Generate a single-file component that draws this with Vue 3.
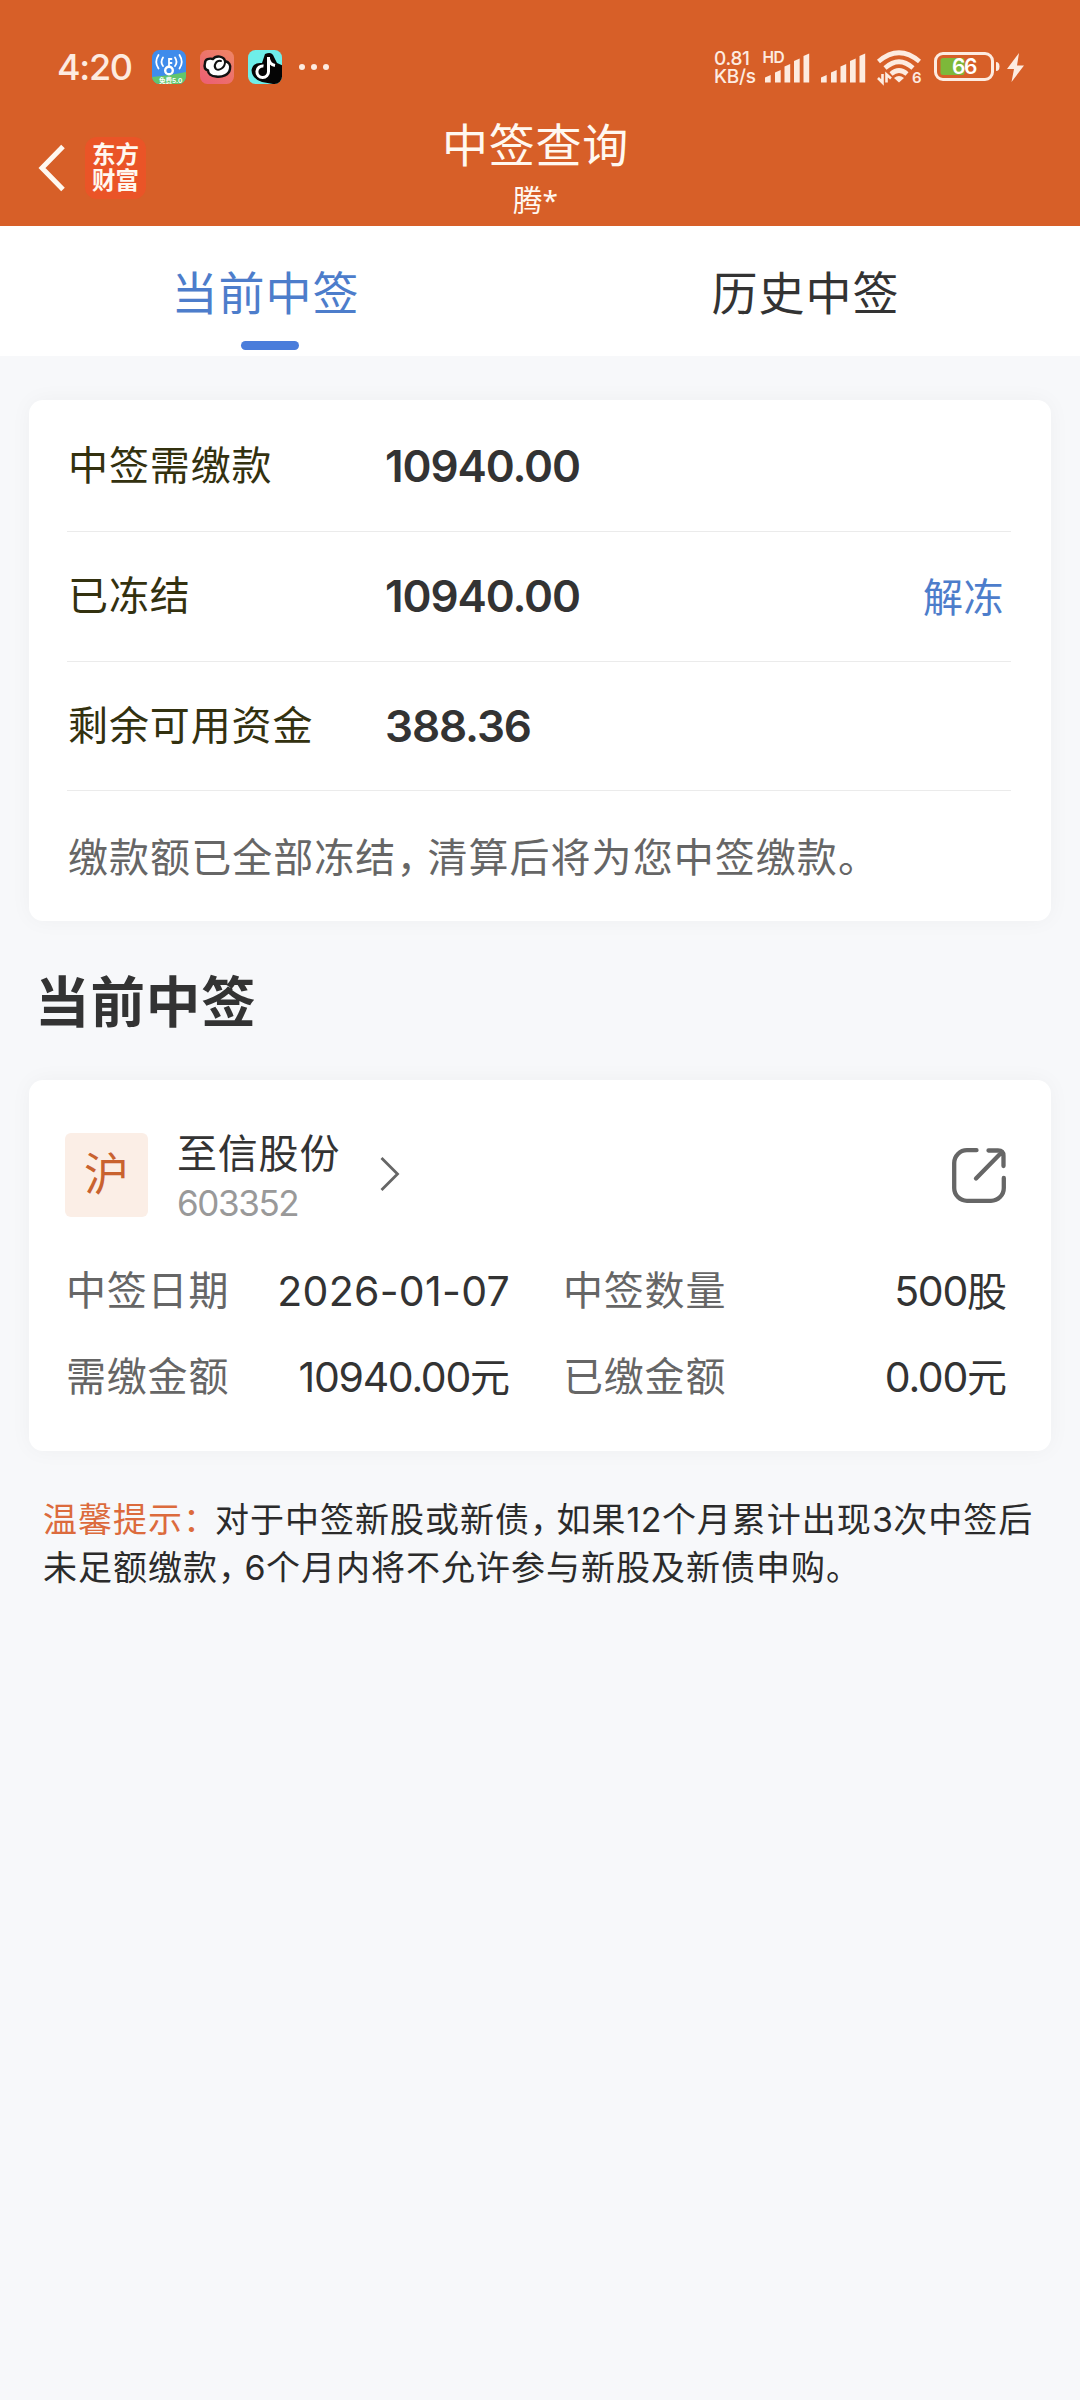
<script setup>
const summary = [
  { label: '中签需缴款', value: '10940.00' },
  { label: '已冻结', value: '10940.00', action: '解冻' },
  { label: '剩余可用资金', value: '388.36' },
]
const details = [
  { label: '中签日期', value: '2026-01-07', unit: '', date: true },
  { label: '中签数量', value: '500', unit: '股' },
  { label: '需缴金额', value: '10940.00', unit: '元' },
  { label: '已缴金额', value: '0.00', unit: '元' },
]
const bars = [
  { x: 0, h: 7 },
  { x: 10, h: 12 },
  { x: 19.5, h: 18 },
  { x: 29, h: 23.5 },
  { x: 38.5, h: 28.5 },
]
</script>

<template>
  <div class="page">
    <header class="header">
      <div class="status">
        <span class="time">4:20</span>
        <svg class="app" width="34" height="34" viewBox="0 0 34 34">
          <defs>
            <clipPath id="r1"><rect width="34" height="34" rx="7.5" /></clipPath>
          </defs>
          <g clip-path="url(#r1)">
            <rect width="34" height="34" fill="#3f8ceb" />
            <path d="M0 27 Q17 26 34 22 V34 H0Z" fill="#62c66c" />
            <g fill="none" stroke="#fff" stroke-width="1.8" stroke-linecap="round">
              <path d="M11 7.500 Q8 12 11 16" />
              <path d="M6.500 5 Q2 12 6.500 18.500" />
              <path d="M23 7.500 Q26 12 23 16" />
              <path d="M27.500 5 Q32 12 27.500 18.500" />
              <path d="M17 17V9h2.500M17 13h2.500" />
              <circle cx="17" cy="20.500" r="3.800" stroke-width="2.400" />
            </g>
            <text x="7" y="32.500" class="mini">免费5.0</text>
          </g>
        </svg>
        <svg class="app" width="34" height="34" viewBox="0 0 34 34">
          <defs>
            <linearGradient id="g2" x1="1" y1="0" x2="0.300" y2="1">
              <stop offset="0" stop-color="#ee8665" />
              <stop offset="1" stop-color="#ec6272" />
            </linearGradient>
          </defs>
          <rect width="34" height="34" rx="7.500" fill="url(#g2)" />
          <path d="M5 13c0-4 4-5 8-4 3-4 11-3 12 2 4 1 6 4 5 8-1 6-8 8.500-14 7.500-5 0-8-3-8-6-3-1-4-4-3-7.500z" fill="#fff" stroke="#111" stroke-width="2.400" />
          <path d="M21 11c-5-1-8 5-5 8 3 2 9-1 9-7" fill="none" stroke="#111" stroke-width="2" stroke-linecap="round" />
        </svg>
        <svg class="app" width="34" height="34" viewBox="0 0 34 34">
          <defs>
            <clipPath id="r3"><rect width="34" height="34" rx="7.500" /></clipPath>
          </defs>
          <g clip-path="url(#r3)">
            <rect width="34" height="34" fill="#6eeee9" />
            <path d="M17 4q7-3 9 3l3 6 7 3V36L14 32Q4 29 3.500 20 5 12 14 13z" fill="#050505" />
            <path d="M20.500 7v14.500a5.800 5.800 0 1 1-5-5.500M20.500 8.500q1 6 6.500 7" fill="none" stroke="#fff" stroke-width="3" />
          </g>
        </svg>
        <svg class="dots" width="30" height="6" viewBox="0 0 30 6" fill="#fdebe0">
          <circle cx="3" cy="3" r="3" /><circle cx="15" cy="3" r="3" /><circle cx="27" cy="3" r="3" />
        </svg>

        <div class="speed"><span>0.81</span><span>KB/s</span></div>
        <svg class="signal" width="46" height="34" viewBox="0 -5 46 34" fill="#fdebe0">
          <text x="-2.500" y="7.500" class="hd">HD</text>
          <path v-for="b in bars" :key="b.x" :d="`M${b.x} 27.500V${29.500 - b.h}l5.700-2.500V27.500z`" />
        </svg>
        <svg class="signal" width="46" height="34" viewBox="0 -5 46 34" fill="#fdebe0">
          <path v-for="b in bars" :key="b.x" :d="`M${b.x} 27.500V${29.500 - b.h}l5.700-2.500V27.500z`" />
        </svg>
        <svg class="wifi" width="45" height="34" viewBox="0 0 45 34">
          <g fill="none" stroke="#fdebe0" stroke-width="4.600">
            <path d="M1.500 11.500Q22 -6 42.500 11.500" />
            <path d="M8 18Q22 5.500 36 18" />
            <path d="M14 24Q22 17 30 24" />
          </g>
          <path d="M17 28Q22 24 27 28L22 32.500z" fill="#fdebe0" />
          <path d="M5.500 24v8.500L1 28M9.500 32.500v-8l4.500 4" fill="none" stroke="#fdebe0" stroke-width="2.600" />
          <text x="35" y="33" class="six">6</text>
        </svg>
        <svg class="battery" width="66" height="30" viewBox="0 0 66 30">
          <rect x="1.500" y="1.500" width="57" height="26" rx="7.500" fill="none" stroke="#fdebe0" stroke-width="3" />
          <rect x="6.500" y="6" width="24" height="17" rx="2.500" fill="#7db83a" />
          <path d="M62 10q3.500 0 3.500 4.500T62 19z" fill="#fdebe0" />
          <text x="30" y="22" text-anchor="middle" class="level">66</text>
        </svg>
        <svg class="bolt" width="17" height="29" viewBox="0 0 17 29">
          <path d="M12 0 0 16h7L4.500 29 17 12.500H10z" fill="#fdebe0" />
        </svg>
      </div>

      <nav class="nav">
        <svg class="back" width="26" height="48" viewBox="0 0 26 48">
          <path d="M24 2.500 3 24 24 45.500" fill="none" stroke="#fff8f0" stroke-width="5" />
        </svg>
        <div class="logo"><span>东方</span><span>财富</span></div>
        <div class="titles">
          <h1>中签查询</h1>
          <p>腾<i>*</i></p>
        </div>
      </nav>
    </header>

    <div class="tabs">
      <div class="tab active">当前中签</div>
      <div class="tab">历史中签</div>
    </div>

    <section class="card summary">
      <div v-for="row in summary" :key="row.label" class="row">
        <span class="label">{{ row.label }}</span>
        <span class="amount">{{ row.value }}</span>
        <a v-if="row.action" class="action">{{ row.action }}</a>
      </div>
      <p class="note">缴款额已全部冻结<span class="comma">，</span>清算后将为您中签缴款。</p>
    </section>

    <h2>当前中签</h2>

    <section class="card stock">
      <div class="stock-head">
        <span class="market">沪</span>
        <div class="stock-name">
          <strong>至信股份</strong>
          <span>603352</span>
        </div>
        <svg class="chevron" width="22" height="34" viewBox="0 0 22 34">
          <path d="M2.500 1 18.500 17 2.500 33" fill="none" stroke="#666" stroke-width="2.800" />
        </svg>
        <svg class="share" width="54" height="55" viewBox="0 0 54 55" fill="none" stroke="#666" stroke-width="4.300" stroke-linecap="round" stroke-linejoin="round">
          <path d="M24.500 2.200H15A12.800 12.800 0 0 0 2.200 15V40A12.800 12.800 0 0 0 15 52.800H39A12.800 12.800 0 0 0 51.800 40V30" />
          <path d="M36.500 2.500H46Q51.500 2.500 51.500 8V18M49 5 24 30.500" />
        </svg>
      </div>
      <div class="grid">
        <div v-for="d in details" :key="d.label" class="cell">
          <span class="key">{{ d.label }}</span>
          <span class="val" :class="{ date: d.date }">{{ d.value }}<b v-if="d.unit">{{ d.unit }}</b></span>
        </div>
      </div>
    </section>

    <p class="tip">
      <span class="tip-title">温馨提示<span class="colon">：</span></span>对于中签新股或新债<span class="comma">，</span>如果<span class="num">12</span>个月累计出现<span class="num">3</span>次中签后<br />未足额缴款<span class="comma">，</span><span class="num">6</span>个月内将不允许参与新股及新债申购。
    </p>
  </div>
</template>

<style>
body {
  background: #f7f8fa;
}
</style>

<style scoped>
.page {
  width: 1080px;
  height: 2400px;
  overflow: hidden;
  background: #f7f8fa;
  color: #333;
  font-family: Inter, "Noto Sans CJK SC", sans-serif;
}
h1, h2, p { margin: 0; font-weight: 400; }
svg { display: block; flex: none; overflow: visible; }

.header { height: 226px; background: #d75f28; color: #fff8f0; }
.status {
  display: flex;
  align-items: center;
  height: 102px;
  padding: 32px 56px 0 57px;
  box-sizing: border-box;
}
.time { width: 95px; color: #fdebe0; font-size: 36px; font-weight: 500; line-height: 36px; letter-spacing: -1.300px; }
.app { margin-right: 14px; }
.dots { margin-left: 3px; }
.speed {
  display: flex;
  flex-direction: column;
  width: 51px;
  margin-left: auto;
  margin-top: 2px;
  color: #fdebe0;
  font-size: 19px;
  font-weight: 500;
  line-height: 18.500px;
  letter-spacing: -0.300px;
}
.signal { margin-right: 10px; }
.hd { font-size: 15.500px; font-weight: 600; letter-spacing: -0.500px; }
.mini { fill: #fff; font-size: 6.500px; font-weight: 700; }
.six { fill: #fdebe0; font-size: 15px; font-weight: 600; }
.wifi { margin-right: 12px; }
.battery { margin-right: 7px; }
.level { fill: #fff; font-size: 21px; font-weight: 600; letter-spacing: -1.500px; }

.nav { display: flex; align-items: flex-start; position: relative; height: 124px; }
.back { margin: 42px 0 0 39px; }
.logo {
  display: flex;
  flex-direction: column;
  justify-content: center;
  align-items: center;
  width: 61px;
  height: 62px;
  margin: 35px 0 0 20px;
  border-radius: 12px;
  background: #ea5427;
  font-size: 23.500px;
  font-weight: 700;
  line-height: 26px;
}
.titles { position: absolute; left: 0; right: 9px; top: 13px; text-align: center; }
.titles h1 { font-size: 46px; line-height: 61px; letter-spacing: 0.700px; }
.titles p { font-size: 29.500px; line-height: 49px; }
.titles i { font-style: normal; font-family: "Noto Sans", sans-serif; font-size: 28px; line-height: 1; }

.tabs { display: flex; height: 130px; background: #fff; }
.tab {
  position: relative;
  flex: 1;
  box-sizing: border-box;
  padding-right: 9px;
  text-align: center;
  font-size: 46px;
  line-height: 134px;
  letter-spacing: 1px;
}
.tab.active { color: #4d7dcb; }
.tab.active::after {
  content: "";
  position: absolute;
  left: 241px;
  top: 115px;
  width: 58px;
  height: 9px;
  border-radius: 5px;
  background: #4a7ddb;
}

.card {
  margin: 0 29px;
  border-radius: 14px;
  background: #fff;
  box-shadow: 0 0 22px rgba(0, 0, 0, 0.04);
}
.summary { height: 521px; margin-top: 44px; padding: 0 40px 0 38px; box-sizing: border-box; }
.row {
  display: flex;
  align-items: center;
  height: 129.500px;
  border-bottom: 1px solid #ebebeb;
  box-sizing: border-box;
}
.row:first-child { height: 132px; }
.label { width: 317px; padding-left: 1px; padding-bottom: 6px; color: #33310f; font-size: 40px; letter-spacing: 0.900px; }
.amount { font-size: 44px; font-weight: 600; letter-spacing: -1.100px; }
.action { margin-left: auto; padding-right: 7px; padding-bottom: 2px; color: #4d7dcb; font-size: 40px; letter-spacing: 0.500px; }
.note { padding-left: 1px; color: #666; font-size: 40px; line-height: 133px; letter-spacing: 1.050px; white-space: nowrap; }
.note .comma { letter-spacing: -9px; }

h2 { margin-left: 35px; height: 158.500px; font-size: 54.500px; font-weight: 700; line-height: 163px; letter-spacing: 0.900px; }

.stock { height: 371px; padding: 53px 44px 0 36px; box-sizing: border-box; }
.stock-head { display: flex; height: 84px; }
.market {
  width: 83px;
  height: 84px;
  border-radius: 6px;
  background: #fbeee6;
  color: #c9622f;
  font-size: 45px;
  line-height: 84px;
  text-align: center;
}
.stock-name { display: flex; flex-direction: column; width: 200px; margin-left: 29px; }
.stock-name strong { font-size: 40px; font-weight: 400; line-height: 41px; letter-spacing: 0.800px; white-space: nowrap; }
.stock-name span { margin-top: 9px; color: #999; font-size: 35px; line-height: 41px; letter-spacing: -1.400px; }
.chevron { margin: 24px 0 0 2px; }
.share { margin: 15px 1px 0 auto; }
.grid {
  display: grid;
  grid-template-columns: 443px 443px;
  column-gap: 54px;
  padding-left: 1px;
  margin-top: 31px;
}
.cell { display: flex; justify-content: space-between; height: 86px; font-size: 40px; line-height: 86px; }
.key { color: #666; letter-spacing: 0.800px; white-space: nowrap; }
.val { margin-right: -1px; font-size: 41px; letter-spacing: -1.300px; white-space: nowrap; }
.val.date { letter-spacing: 0.300px; }
.val b { font-size: 40px; font-weight: 400; letter-spacing: 0; }

.tip { margin: 45px 0 0 43px; color: #2b2b2b; font-size: 34px; line-height: 48px; letter-spacing: 1px; white-space: nowrap; }
.tip-title { color: #dc6b3d; }
.tip .comma { letter-spacing: -7.500px; }
.tip .colon { letter-spacing: -2px; }
.tip .num { letter-spacing: 0.400px; }
</style>
